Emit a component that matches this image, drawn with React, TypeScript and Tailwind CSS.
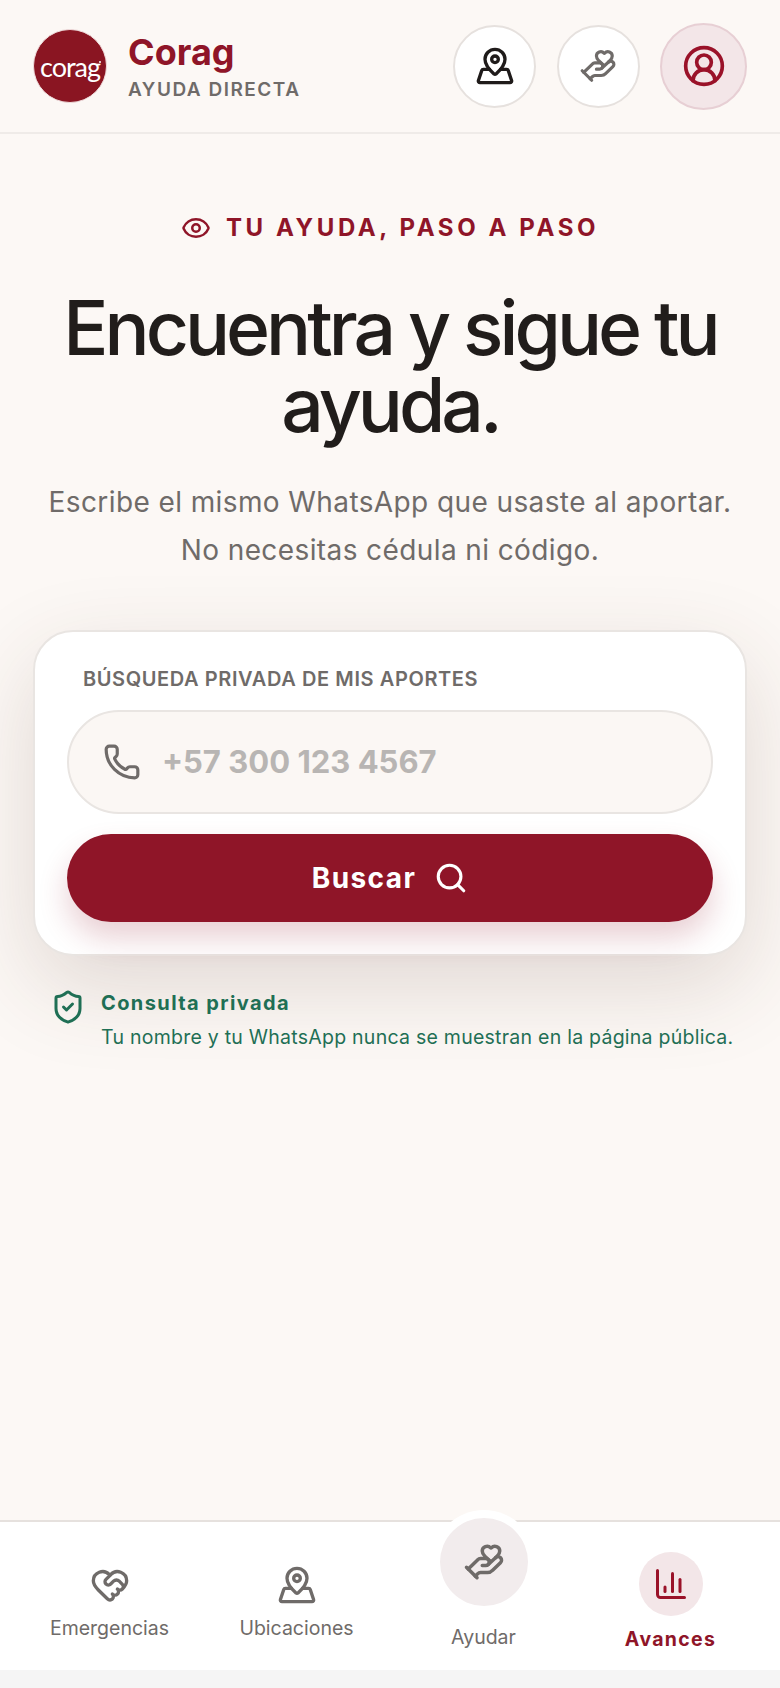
import { ChartColumn, CircleUserRound, Eye, HandHeart, HeartHandshake, MapPinned, Phone, Search, ShieldCheck } from "lucide-react";

const font = "font-['Inter','Liberation_Sans',sans-serif]";

const Header = () => {
  return (
    <header className="flex h-[134px] shrink-0 items-center justify-between border-b-2 border-[#efebe8] pl-[33px] pr-[33px]">
      <div className="flex items-center gap-[21px]">
        <div className="relative flex h-[74px] w-[74px] items-center justify-center rounded-full border border-[#efdcdc] bg-[#8a1522]">
          <span className="font-['Lato',sans-serif] text-[27px] font-normal leading-none tracking-[-1px] text-white">corag</span>
          <span className="absolute right-[5px] top-[31px] h-[2px] w-[2px] rounded-full bg-white" />
        </div>
        <div className="pt-0.5">
          <div className="text-[36px] font-bold leading-[38px] text-[#8f1528]">Corag</div>
          <div className="mt-[7px] text-[19px] font-semibold leading-[24px] tracking-[1.5px] text-[#6f6b69]">AYUDA DIRECTA</div>
        </div>
      </div>
      <div className="flex items-center gap-[20.5px]">
        <button className="flex h-[83px] w-[83px] items-center justify-center rounded-full border-2 border-[#e6e1de] bg-white text-[#1f1b1a]">
          <MapPinned size={40} strokeWidth={2} />
        </button>
        <button className="flex h-[83px] w-[83px] items-center justify-center rounded-full border-2 border-[#e6e1de] bg-white text-[#6f6b69]">
          <HandHeart size={38} strokeWidth={2} />
        </button>
        <button className="flex h-[87px] w-[87px] items-center justify-center rounded-full border-2 border-[#e7cfd4] bg-[#f3e6e8] text-[#9a1229]">
          <CircleUserRound size={44} strokeWidth={2} />
        </button>
      </div>
    </header>
  );
};

const SearchCard = () => {
  return (
    <div className="mx-[33px] mt-[56px] rounded-[40px] border-2 border-[#e9e5e2] bg-white px-8 pb-8 pt-[35px] shadow-[0_30px_90px_rgba(80,50,40,0.16)]">
      <div className="pl-4 text-[20px] font-semibold leading-[24px] tracking-[0.6px] text-[#6f6b69]">BÚSQUEDA PRIVADA DE MIS APORTES</div>
      <div className="mt-[19px] flex h-[104px] items-center gap-[21px] rounded-full border-2 border-[#e9e5e2] bg-[#fbf7f4] pl-[34px]">
        <Phone size={38} strokeWidth={2} className="text-[#6f6b69]" />
        <span className="text-[31px] font-bold text-[#b8b5b3]">+57 300 123 4567</span>
      </div>
      <button className="mt-[20px] flex h-[88px] w-full items-center justify-center gap-[18px] rounded-full bg-[#8f1528] text-[28px] font-bold tracking-[1.4px] text-white shadow-[0_16px_30px_rgba(143,21,40,0.2)]">
        Buscar
        <Search size={34} strokeWidth={2.2} />
      </button>
    </div>
  );
};

const Nav = () => {
  return (
    <nav className="grid h-[150px] shrink-0 grid-cols-4 border-t-2 border-[#e6e1de] bg-white px-4 text-[19.5px] text-[#6f6b69]">
      <div className="flex flex-col items-center pt-[43px]">
        <HeartHandshake size={40} strokeWidth={2} />
        <span className="mt-[10px] leading-[26px]">Emergencias</span>
      </div>
      <div className="flex flex-col items-center pt-[43px]">
        <MapPinned size={40} strokeWidth={2} />
        <span className="mt-[10px] leading-[26px]">Ubicaciones</span>
      </div>
      <div className="flex flex-col items-center">
        <div className="-mt-[4px] flex h-[88px] w-[88px] items-center justify-center rounded-full bg-[#f2eced] shadow-[0_0_0_8px_white]">
          <HandHeart size={42} strokeWidth={2} />
        </div>
        <span className="mt-[18px] leading-[26px]">Ayudar</span>
      </div>
      <div className="flex flex-col items-center pt-[30px]">
        <div className="flex h-[64px] w-[64px] items-center justify-center rounded-full bg-[#f3e6e8] text-[#9a1229]">
          <ChartColumn size={36} strokeWidth={2} />
        </div>
        <span className="mt-[10px] font-bold leading-[26px] tracking-[1.3px] text-[#8f1528]">Avances</span>
      </div>
    </nav>
  );
};

export default function App() {
  return (
    <div className={`${font} flex h-[1688px] flex-col overflow-hidden bg-[#f5f5f5] pb-[18px]`}>
      <div className="flex min-h-0 flex-1 flex-col bg-[#fcf8f5]">
        <Header />
        <main className="flex-1 pt-[79px]">
          <div className="flex items-center justify-center gap-[15px] text-[#8f1528]">
            <Eye size={30} strokeWidth={2} />
            <span className="text-[24px] font-bold leading-[30px] tracking-[3.6px]">TU AYUDA, PASO A PASO</span>
          </div>
          <h1 className="mt-[46px] text-center text-[75px] font-medium leading-[77px] tracking-[-4px] text-[#211d1b]">
            Encuentra y sigue tu
            <br />
            ayuda.
          </h1>
          <div className="mt-[35px] text-center text-[28px] leading-[48px] tracking-[0.4px] text-[#6f6b69]">
            <p>Escribe el mismo WhatsApp que usaste al aportar.</p>
            <p>No necesitas cédula ni código.</p>
          </div>
          <SearchCard />
          <div className="mt-[33px] flex items-start gap-[15px] pl-[50px] text-[#1f6f55]">
            <ShieldCheck size={36} strokeWidth={2} />
            <div>
              <div className="text-[20px] font-bold leading-[28px] tracking-[1.4px]">Consulta privada</div>
              <div className="mt-[6px] whitespace-nowrap text-[19.5px] leading-[28px] tracking-[0.25px]">Tu nombre y tu WhatsApp nunca se muestran en la página pública.</div>
            </div>
          </div>
        </main>
      </div>
      <Nav />
    </div>
  );
}
